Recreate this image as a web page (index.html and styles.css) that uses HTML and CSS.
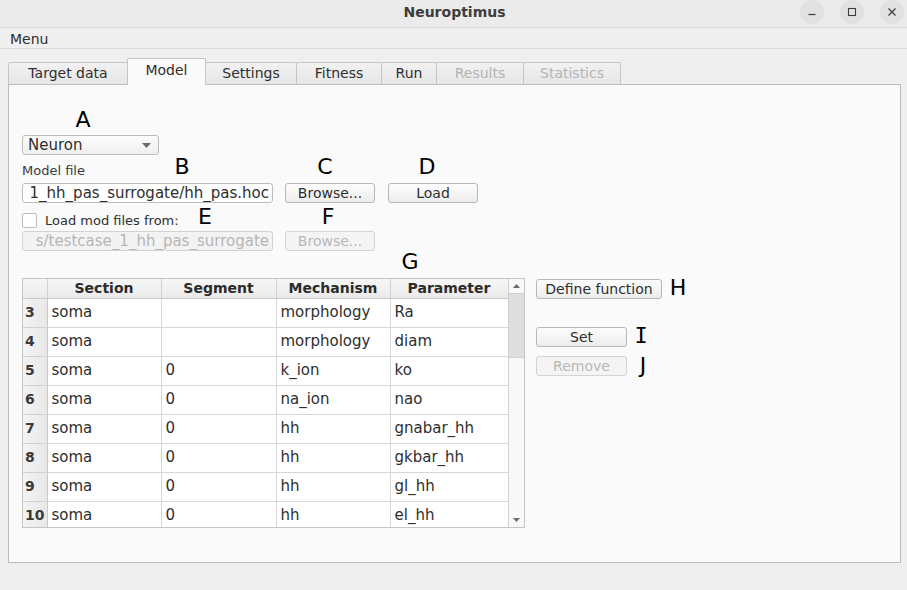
FILE: index.html
```html
<!DOCTYPE html>
<html lang="en">
<head>
<meta charset="utf-8">
<title>Neuroptimus</title>
<link rel="stylesheet" href="styles.css">
</head>
<body>
<div class="window">
  <header class="titlebar">
    <div></div>
    <div class="title">Neuroptimus</div>
    <div class="wm">
      <span class="wbtn"><svg width="10" height="10" viewBox="0 0 10 10"><path d="M1.5 7.5h7" stroke="#3c3c3c" stroke-width="1.2"/></svg></span>
      <span class="wbtn"><svg width="10" height="10" viewBox="0 0 10 10"><rect x="1.5" y="1.5" width="7" height="7" fill="none" stroke="#3c3c3c" stroke-width="1.1"/></svg></span>
      <span class="wbtn"><svg width="10" height="10" viewBox="0 0 10 10"><path d="M1.5 1.5l7 7M8.5 1.5l-7 7" stroke="#3c3c3c" stroke-width="1.2"/></svg></span>
    </div>
  </header>
  <nav class="menubar"><span class="menu-item">Menu</span></nav>

  <div class="tabs">
    <span class="tab">Target data</span>
    <span class="tab active">Model</span>
    <span class="tab">Settings</span>
    <span class="tab">Fitness</span>
    <span class="tab">Run</span>
    <span class="tab disabled">Results</span>
    <span class="tab disabled">Statistics</span>
  </div>

  <section class="panel">
    <div class="combo"><span>Neuron</span><svg width="9" height="5" viewBox="0 0 9 5"><path d="M0 0h9L4.5 5z" fill="#6a6a6a"/></svg></div>
    <div class="field-label">Model file</div>
    <div class="row">
      <div class="input"><span>1_hh_pas_surrogate/hh_pas.hoc</span></div>
      <button class="btn w90">Browse...</button>
      <button class="btn w90">Load</button>
    </div>
    <label class="check-row"><span class="checkbox"></span><span>Load mod files from:</span></label>
    <div class="row row2">
      <div class="input disabled"><span>s/testcase_1_hh_pas_surrogate</span></div>
      <button class="btn w90" disabled>Browse...</button>
    </div>

    <div class="table-area">
      <div class="table-wrap">
        <div class="grid">
          <table>
            <colgroup>
              <col class="c-num"><col class="c-sec"><col class="c-seg"><col class="c-mech"><col class="c-par">
            </colgroup>
            <thead>
              <tr><th class="corner"></th><th>Section</th><th>Segment</th><th>Mechanism</th><th>Parameter</th></tr>
            </thead>
            <tbody>
              <tr><th class="rn">3</th><td>soma</td><td></td><td>morphology</td><td>Ra</td></tr>
              <tr><th class="rn">4</th><td>soma</td><td></td><td>morphology</td><td>diam</td></tr>
              <tr><th class="rn">5</th><td>soma</td><td>0</td><td>k_ion</td><td>ko</td></tr>
              <tr><th class="rn">6</th><td>soma</td><td>0</td><td>na_ion</td><td>nao</td></tr>
              <tr><th class="rn">7</th><td>soma</td><td>0</td><td>hh</td><td>gnabar_hh</td></tr>
              <tr><th class="rn">8</th><td>soma</td><td>0</td><td>hh</td><td>gkbar_hh</td></tr>
              <tr><th class="rn">9</th><td>soma</td><td>0</td><td>hh</td><td>gl_hh</td></tr>
              <tr><th class="rn">10</th><td>soma</td><td>0</td><td>hh</td><td>el_hh</td></tr>
            </tbody>
          </table>
        </div>
        <div class="scrollbar">
          <div class="arrow"><svg width="7" height="4" viewBox="0 0 7 4"><path d="M0 4h7L3.5 0z" fill="#6a6a6a"/></svg></div>
          <div class="thumb"></div>
          <div class="track"></div>
          <div class="arrow"><svg width="7" height="4" viewBox="0 0 7 4"><path d="M0 0h7L3.5 4z" fill="#6a6a6a"/></svg></div>
        </div>
      </div>
      <div class="side">
        <button class="btn w126">Define function</button>
        <button class="btn w91 set">Set</button>
        <button class="btn w91" disabled>Remove</button>
      </div>
    </div>

    <span class="note" style="left:74px;top:35px">A</span>
    <span class="note" style="left:173px;top:82px">B</span>
    <span class="note" style="left:316px;top:82px">C</span>
    <span class="note" style="left:418px;top:82px">D</span>
    <span class="note" style="left:196px;top:132px">E</span>
    <span class="note" style="left:319px;top:132px">F</span>
    <span class="note" style="left:401px;top:177px">G</span>
    <span class="note" style="left:669px;top:203px">H</span>
    <span class="note serif-i" style="left:632px;top:251px">I</span>
    <span class="note" style="left:634px;top:281px">J</span>
  </section>
</div>
</body>
</html>
```

FILE: styles.css
```css
* { box-sizing: border-box; }
html, body { margin: 0; padding: 0; }
body {
  width: 907px;
  height: 590px;
  overflow: hidden;
  background: #efefef;
  font-family: "DejaVu Sans", "Noto Sans", sans-serif;
  color: #333;
}
.window { width: 907px; height: 590px; }

.titlebar {
  height: 28px;
  display: grid;
  grid-template-columns: 1fr auto 1fr;
  align-items: center;
  padding-bottom: 4px;
  background: #ebebeb;
  border-bottom: 1px solid #d9d9d9;
}
.title {
  font-weight: bold;
  font-size: 14px;
  color: #3d3d3d;
  padding-left: 2px;
}
.wm {
  justify-self: end;
  display: flex;
  gap: 16px;
  padding-right: 3px;
}
.wbtn {
  width: 24px;
  height: 24px;
  border-radius: 50%;
  background: #e1e1e1;
  display: flex;
  align-items: center;
  justify-content: center;
}

.menubar {
  height: 21px;
  display: flex;
  align-items: center;
  padding-left: 10px;
  padding-top: 1px;
  border-bottom: 1px solid #dadada;
  background: #efefef;
}
.menu-item { font-size: 14px; color: #2e2e2e; }

.tabs {
  display: flex;
  align-items: flex-end;
  height: 35px;
  padding-left: 8px;
  position: relative;
  z-index: 1;
}
.tab {
  height: 22px;
  padding: 0 0 1px;
  display: flex;
  align-items: center;
  justify-content: center;
  font-size: 14px;
  color: #2e2e2e;
  background: linear-gradient(#f1f1f1, #e7e7e7);
  border: 1px solid #c6c6c6;
  border-bottom: none;
  border-radius: 2px 2px 0 0;
  margin-right: -1px;
}
.tab:nth-child(1) { width: 120px; }
.tab:nth-child(2) { width: 79px; }
.tab:nth-child(3) { width: 92px; }
.tab:nth-child(4) { width: 86px; }
.tab:nth-child(5) { width: 56px; }
.tab:nth-child(6) { width: 88px; }
.tab:nth-child(7) { width: 98px; }
.tab.active {
  height: 27px;
  background: #fafafa;
  margin-bottom: -1px;
  padding-bottom: 5px;
}
.tab.disabled { color: #b4b4b4; }

.panel {
  position: relative;
  margin-left: 8px;
  width: 893px;
  height: 479px;
  background: #fafafa;
  border: 1px solid #bcbcbc;
  padding: 50px 0 0 13px;
}

.combo {
  width: 137px;
  height: 20px;
  border: 1px solid #bdbdbd;
  border-radius: 3px;
  background: linear-gradient(#fcfcfc, #efefef);
  display: flex;
  align-items: center;
  justify-content: space-between;
  padding: 0 7px 0 5px;
  font-size: 15px;
  color: #2e2e2e;
}
.field-label {
  margin-top: 8px;
  height: 16px;
  line-height: 16px;
  font-size: 13px;
  color: #3a3a3a;
}
.row {
  margin-top: 4px;
  height: 20px;
  display: flex;
  gap: 12px;
}
.row .btn + .btn { margin-left: 1px; }
.input {
  width: 251px;
  height: 20px;
  border: 1px solid #bdbdbd;
  border-radius: 3px;
  background: #fff;
  display: flex;
  justify-content: flex-end;
  align-items: center;
  overflow: hidden;
  white-space: nowrap;
  padding-right: 3px;
  font-size: 15px;
  color: #2e2e2e;
}
.input.disabled {
  background: #f3f3f3;
  border-color: #d2d2d2;
  color: #b6b6b6;
}
.btn {
  height: 20px;
  padding: 0;
  border: 1px solid #b8b8b8;
  border-radius: 3px;
  background: linear-gradient(#fdfdfd, #ececec);
  font-family: "DejaVu Sans", "Noto Sans", sans-serif;
  font-size: 14px;
  color: #2e2e2e;
  display: flex;
  align-items: center;
  justify-content: center;
}
.btn:disabled {
  color: #b8b8b8;
  border-color: #d4d4d4;
  background: #f4f4f4;
}
.w90 { width: 90px; }
.w91 { width: 91px; }
.w126 { width: 126px; }

.check-row {
  margin-top: 10px;
  height: 15px;
  display: flex;
  align-items: center;
  gap: 8px;
  font-size: 13px;
  color: #2e2e2e;
}
.checkbox {
  width: 15px;
  height: 15px;
  border: 1px solid #bdbdbd;
  border-radius: 2px;
  background: #fff;
}
.row2 { margin-top: 3px; }

.table-area {
  margin-top: 27px;
  display: flex;
  align-items: flex-start;
  gap: 11px;
}
.table-wrap {
  width: 503px;
  height: 250px;
  border: 1px solid #c6c6c6;
  display: flex;
  background: #fff;
}
.grid {
  width: 485px;
  height: 248px;
  overflow: hidden;
}
table {
  border-collapse: collapse;
  table-layout: fixed;
  width: 485px;
}
.c-num { width: 24px; }
.c-sec { width: 114px; }
.c-seg { width: 115px; }
.c-mech { width: 114px; }
.c-par { width: 118px; }
thead th {
  height: 19px;
  padding: 0;
  font-size: 14px;
  font-weight: bold;
  color: #2b2b2b;
  text-align: center;
  background: linear-gradient(#f6f6f6, #eaeaea);
  border-right: 1px solid #d2d2d2;
  border-bottom: 1px solid #c9c9c9;
}
tbody tr { height: 29px; }
th.rn {
  padding: 0 0 2px 2px;
  text-align: left;
  font-size: 14px;
  font-weight: bold;
  color: #3a3a3a;
  background: linear-gradient(90deg, #f3f3f3, #e8e8e8);
  border-right: 1px solid #c9c9c9;
  border-bottom: 1px solid #d2d2d2;
}
td {
  padding: 0 0 2px 4px;
  font-size: 15px;
  color: #2e2e2e;
  white-space: nowrap;
  overflow: hidden;
  border-right: 1px solid #d6d6d6;
  border-bottom: 1px solid #d6d6d6;
}
.scrollbar {
  width: 16px;
  height: 248px;
  border-left: 1px solid #d0d0d0;
  background: #f8f8f8;
  display: flex;
  flex-direction: column;
}
.arrow {
  height: 14px;
  display: flex;
  align-items: center;
  justify-content: center;
}
.thumb {
  height: 65px;
  background: #dedede;
  border-top: 1px solid #cfcfcf;
  border-bottom: 1px solid #cfcfcf;
}
.track { flex: 1; }

.side {
  display: flex;
  flex-direction: column;
  padding-top: 1px;
}
.side .set { margin-top: 28px; }
.side .set + .btn { margin-top: 9px; }

.note {
  position: absolute;
  transform: translate(-50%, -50%);
  font-family: "DejaVu Sans", sans-serif;
  font-size: 22px;
  color: #000;
  line-height: 1;
}
.serif-i { font-family: "DejaVu Sans Mono", monospace; }
```
